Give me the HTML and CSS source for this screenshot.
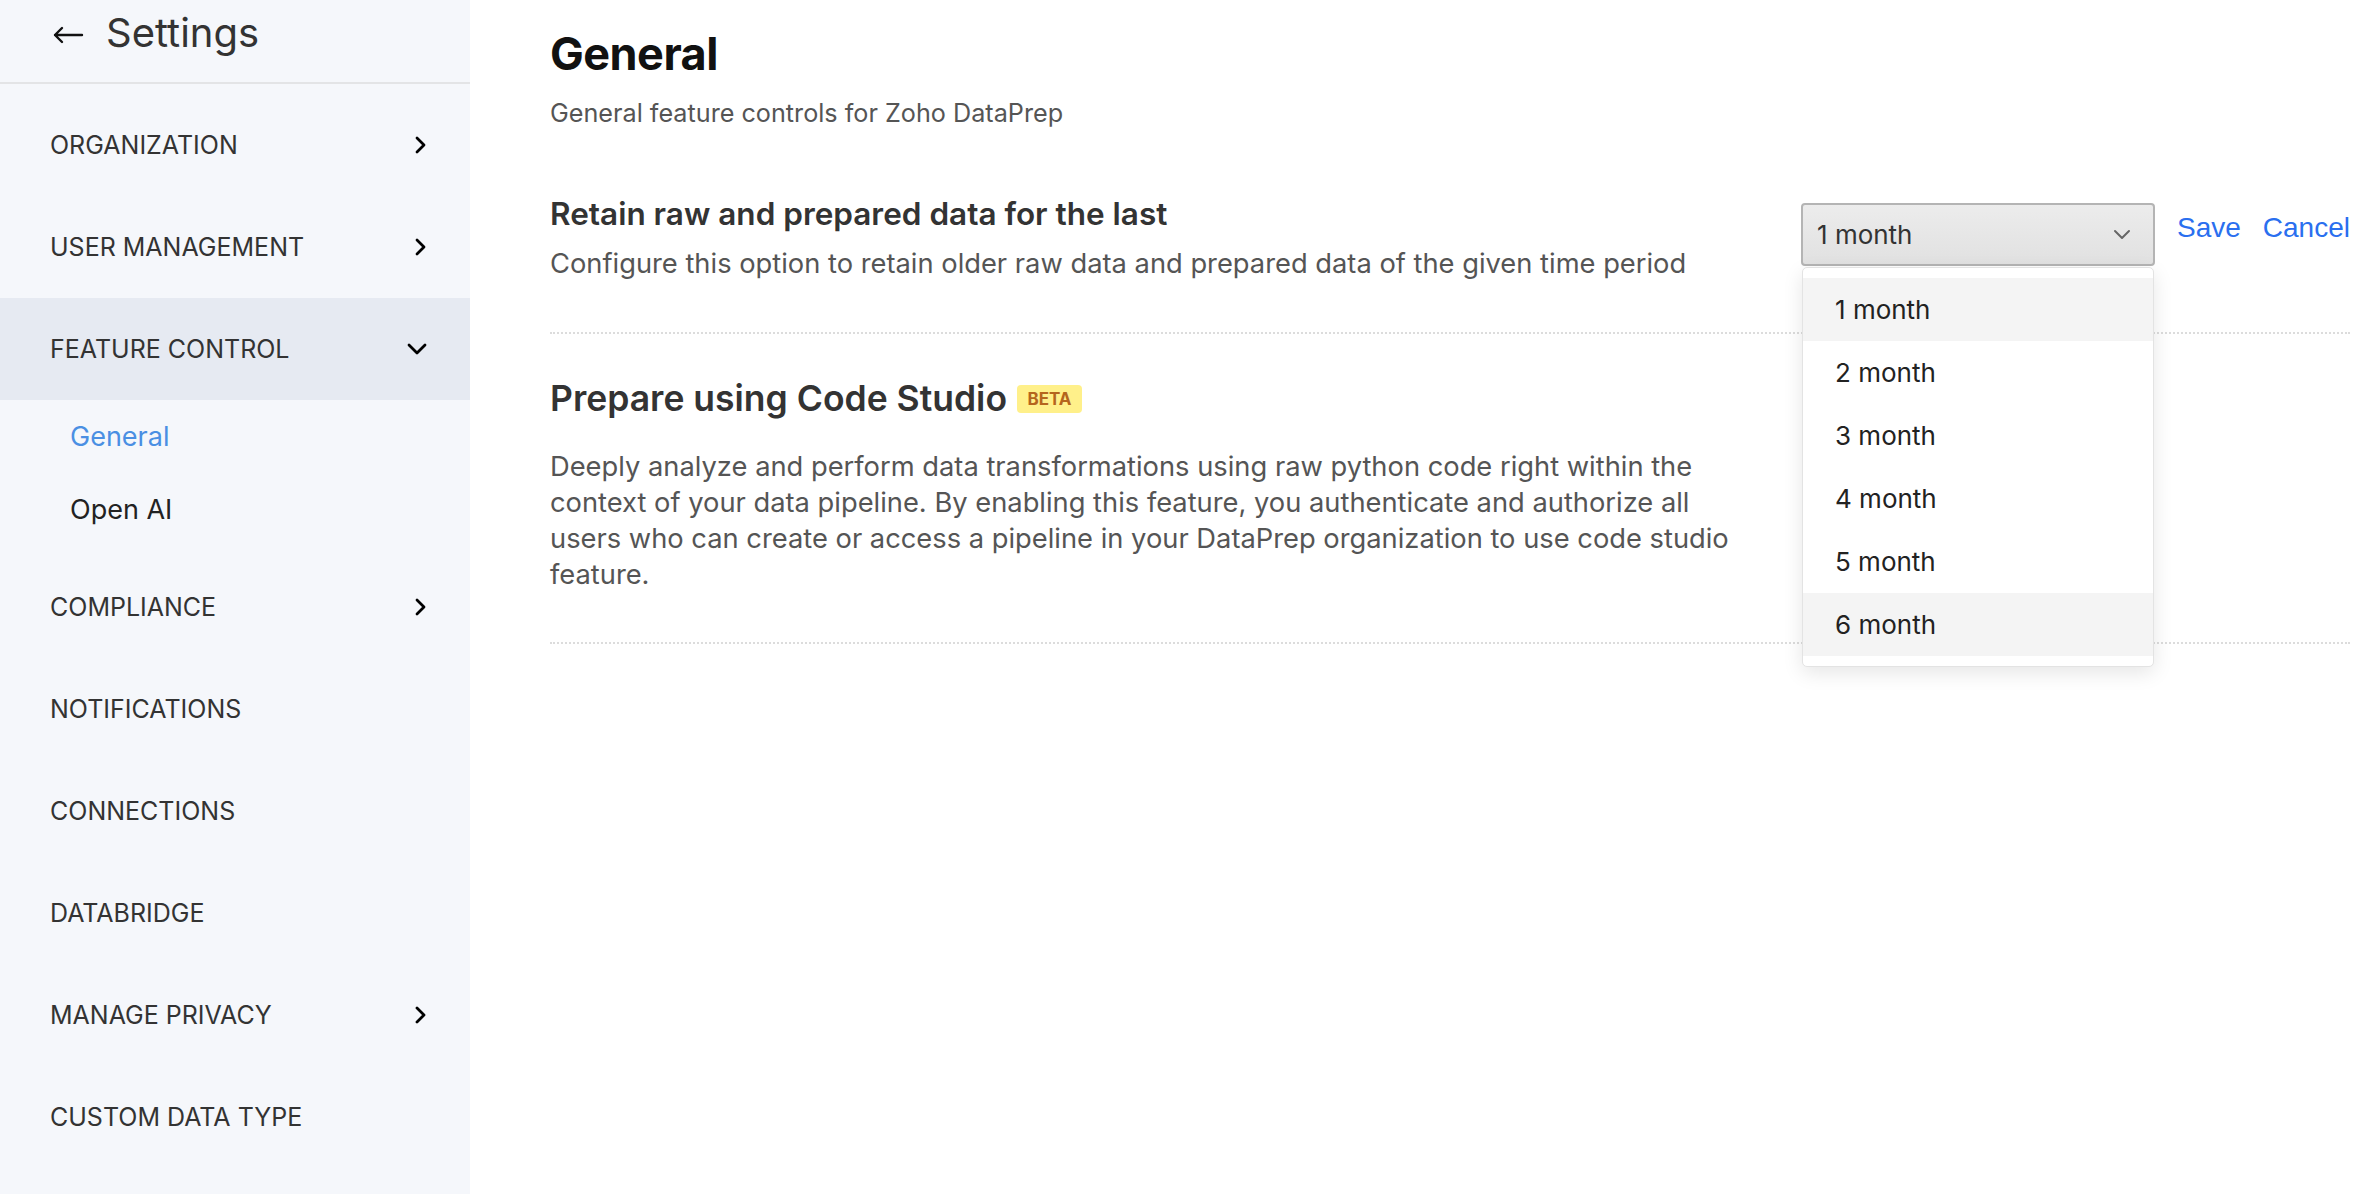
FILE: index.html
```html
<!DOCTYPE html>
<html lang="en">
<head>
<meta charset="utf-8">
<title>Settings - General</title>
<link rel="stylesheet" href="styles.css">
</head>
<body>
<aside class="sidebar">
  <div class="side-head">
    <svg class="back" width="32" height="18" viewBox="0 0 32 18"><path d="M30 9H3M10 2L3 9l7 7" fill="none" stroke="#111" stroke-width="2.4" stroke-linecap="round" stroke-linejoin="round"/></svg>
    <span class="side-title">Settings</span>
  </div>
  <nav class="nav">
    <div class="nav-item"><span>ORGANIZATION</span><svg class="chev" width="20" height="18" viewBox="0 0 20 18"><path d="M10 2l7 7-7 7" fill="none" stroke="#000" stroke-width="2.8" stroke-linecap="round" stroke-linejoin="round"/></svg></div>
    <div class="nav-item"><span>USER MANAGEMENT</span><svg class="chev" width="20" height="18" viewBox="0 0 20 18"><path d="M10 2l7 7-7 7" fill="none" stroke="#000" stroke-width="2.8" stroke-linecap="round" stroke-linejoin="round"/></svg></div>
    <div class="nav-item active"><span>FEATURE CONTROL</span><svg class="chev" width="20" height="14" viewBox="0 0 20 14"><path d="M2 3l8 8 8-8" fill="none" stroke="#000" stroke-width="2.8" stroke-linecap="round" stroke-linejoin="round"/></svg></div>
    <div class="sub-list">
      <div class="sub-item current">General</div>
      <div class="sub-item">Open AI</div>
    </div>
    <div class="nav-item"><span>COMPLIANCE</span><svg class="chev" width="20" height="18" viewBox="0 0 20 18"><path d="M10 2l7 7-7 7" fill="none" stroke="#000" stroke-width="2.8" stroke-linecap="round" stroke-linejoin="round"/></svg></div>
    <div class="nav-item"><span>NOTIFICATIONS</span></div>
    <div class="nav-item"><span>CONNECTIONS</span></div>
    <div class="nav-item"><span>DATABRIDGE</span></div>
    <div class="nav-item"><span>MANAGE PRIVACY</span><svg class="chev" width="20" height="18" viewBox="0 0 20 18"><path d="M10 2l7 7-7 7" fill="none" stroke="#000" stroke-width="2.8" stroke-linecap="round" stroke-linejoin="round"/></svg></div>
    <div class="nav-item"><span>CUSTOM DATA TYPE</span></div>
  </nav>
</aside>

<main class="main">
  <header class="page-head">
    <h1 class="page-title">General</h1>
    <p class="page-sub">General feature controls for Zoho DataPrep</p>
  </header>

  <section class="section section-retain">
    <div class="section-text">
      <h2 class="section-title">Retain raw and prepared data for the last</h2>
      <p class="section-desc">Configure this option to retain older raw data and prepared data of the given time period</p>
    </div>
    <div class="controls">
      <div class="select-wrap">
        <div class="select-box">
          <span>1 month</span>
          <svg width="18" height="12" viewBox="0 0 18 12"><path d="M2 2l7 7 7-7" fill="none" stroke="#666" stroke-width="2" stroke-linecap="round" stroke-linejoin="round"/></svg>
        </div>
        <ul class="menu">
          <li class="menu-item hl">1 month</li>
          <li class="menu-item">2 month</li>
          <li class="menu-item">3 month</li>
          <li class="menu-item">4 month</li>
          <li class="menu-item">5 month</li>
          <li class="menu-item hl">6 month</li>
        </ul>
      </div>
      <a class="link">Save</a>
      <a class="link">Cancel</a>
    </div>
  </section>

  <section class="section section-code">
    <div class="section-text">
      <h2 class="section-title code-title">Prepare using Code Studio <span class="beta">BETA</span></h2>
      <p class="section-para">Deeply analyze and perform data transformations using raw python code right within the context of your data pipeline. By enabling this feature, you authenticate and authorize all users who can create or access a pipeline in your DataPrep organization to use code studio feature.</p>
    </div>
  </section>
</main>
</body>
</html>
```

FILE: styles.css
```css
* { box-sizing: border-box; }

body {
  margin: 0;
  display: flex;
  min-height: 100vh;
  font-family: Inter, "Noto Sans", sans-serif;
  background: #fff;
  color: #333;
}

/* Sidebar */
.sidebar {
  width: 470px;
  flex: none;
  background: #f5f7fb;
  min-height: 1194px;
}

.side-head {
  height: 84px;
  border-bottom: 2px solid #e3e4e6;
  display: flex;
  align-items: flex-start;
  padding: 9px 0 0 52px;
  gap: 22px;
}

.back { margin-top: 17px; }

.side-title {
  font-size: 40px;
  line-height: 48px;
  color: #333;
}

.nav { padding-top: 10px; }

.nav-item {
  height: 102px;
  display: flex;
  align-items: center;
  justify-content: space-between;
  padding: 0 43px 0 50px;
  font-size: 25px;
  color: #333;
}

.nav-item.active { background: #e6eaf2; }

.sub-list { padding-bottom: 10px; }

.sub-item {
  height: 73px;
  display: flex;
  align-items: center;
  padding-left: 70px;
  font-size: 27px;
  color: #222;
}

.sub-item.current { color: #4a8fe3; }

/* Main */
.main {
  flex: 1;
  padding: 0 18px 0 80px;
}

.page-title {
  margin: 27px 0 0;
  font-size: 45px;
  line-height: 54px;
  font-weight: 700;
  color: #111;
  letter-spacing: -0.5px;
}

.page-sub {
  margin: 14px 0 0;
  font-size: 25.2px;
  line-height: 36px;
  color: #555;
}

.section {
  display: flex;
  justify-content: space-between;
  align-items: flex-start;
  border-bottom: 2px dotted #dcdcdc;
}

.section-retain { padding: 63px 0 50px; }
.section-code { padding: 43px 0 49px; }

.section-title {
  margin: 0;
  font-size: 31.5px;
  line-height: 40px;
  font-weight: 600;
  color: #333;
}

.section-desc {
  margin: 12px 0 0;
  font-size: 27.3px;
  line-height: 36px;
  color: #555;
}

.code-title {
  display: flex;
  align-items: center;
  font-size: 35.5px;
  line-height: 44px;
}

.beta {
  display: inline-flex;
  align-items: center;
  justify-content: center;
  margin-left: 10px;
  width: 65px;
  height: 28px;
  background: #fff08a;
  color: #b5651d;
  font-size: 17px;
  font-weight: 700;
  border-radius: 4px;
  letter-spacing: 0;
}

.section-para {
  margin: 28px 0 0;
  max-width: 1190px;
  font-size: 27.3px;
  line-height: 36px;
  color: #555;
}

/* Controls */
.controls {
  flex: none;
  display: flex;
  align-items: flex-start;
  margin-top: 9px;
}

.select-wrap { position: relative; }

.select-box {
  width: 354px;
  height: 63px;
  display: flex;
  align-items: center;
  justify-content: space-between;
  padding: 0 22px 0 14px;
  border: 2px solid #b4b4b4;
  border-radius: 4px;
  background: linear-gradient(#ececec, #e1e1e1);
  font-size: 26px;
  color: #333;
}

.menu {
  position: absolute;
  top: 64px;
  left: 1px;
  width: 352px;
  margin: 0;
  padding: 10px 0;
  list-style: none;
  background: #fff;
  border: 1px solid #e3e3e3;
  border-radius: 5px;
  box-shadow: 0 6px 20px rgba(0, 0, 0, 0.10);
  z-index: 10;
}

.menu-item {
  height: 63px;
  display: flex;
  align-items: center;
  padding-left: 32px;
  font-size: 26px;
  color: #222;
}

.menu-item.hl { background: #f4f4f4; }

.link {
  margin: 5px 0 0 22px;
  font-family: "Liberation Sans", Arial, sans-serif;
  font-size: 28px;
  line-height: 40px;
  color: #2a6fef;
  cursor: pointer;
}
```
